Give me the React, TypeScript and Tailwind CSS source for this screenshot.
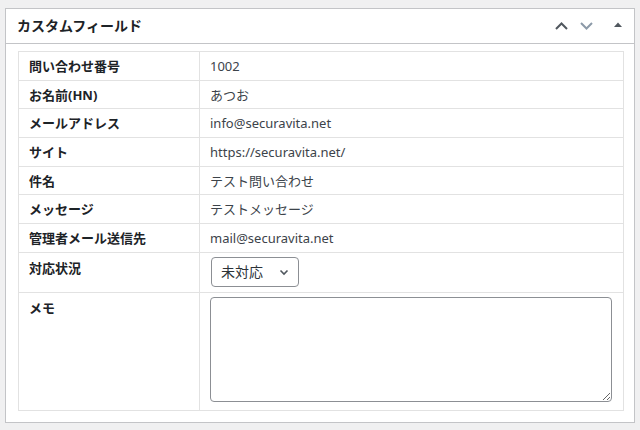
const rows: { label: string; value: string }[] = [
  { label: "問い合わせ番号", value: "1002" },
  { label: "お名前(HN)", value: "あつお" },
  { label: "メールアドレス", value: "info@securavita.net" },
  { label: "サイト", value: "https://securavita.net/" },
  { label: "件名", value: "テスト問い合わせ" },
  { label: "メッセージ", value: "テストメッセージ" },
  { label: "管理者メール送信先", value: "mail@securavita.net" },
];

export default function App() {
  return (
    <div
      className="w-[640px] h-[430px] bg-[#f0f0f1] pt-[8px] px-[5px]"
      style={{ fontFamily: '"Noto Sans", "Noto Sans CJK JP", sans-serif' }}
    >
      <div className="bg-white border border-[#c3c4c7] h-[415px]">
        <div className="h-[35px] border-b border-[#c3c4c7] flex items-center pl-[11px] pr-[12px]">
          <h2 className="text-[14px] font-bold text-[#1d2327] flex-1 leading-none">
            カスタムフィールド
          </h2>
          <div className="flex items-center">
            <svg width="13" height="8" viewBox="0 0 13 8">
              <path d="M1 7 L6.5 1.5 L12 7" stroke="#50575e" strokeWidth="2" fill="none" />
            </svg>
            <svg width="13" height="8" viewBox="0 0 13 8" className="ml-[12px]">
              <path d="M1 1 L6.5 6.5 L12 1" stroke="#8c9aa8" strokeWidth="2" fill="none" />
            </svg>
            <svg width="8" height="6" viewBox="0 0 8 6" className="ml-[21px] -mt-[2px]">
              <path d="M0 5 L4 0.5 L8 5 Z" fill="#50575e" />
            </svg>
          </div>
        </div>

        <div className="px-[12px] pt-[7px]">
          <table className="w-[606px] table-fixed border-collapse border border-[#e2e2e2] text-[13px]">
            <tbody>
              {rows.map((row) => (
                <tr key={row.label} className="h-[28.7px] border-b border-[#e2e2e2]">
                  <td className="w-[181px] p-0 pl-[10px] font-bold text-[#1d2327] border-r border-[#e2e2e2] leading-[14px]">
                    {row.label}
                  </td>
                  <td className="p-0 pl-[10px] text-[#3c434a] leading-[14px]">
                    {row.value}
                  </td>
                </tr>
              ))}
              <tr className="h-[40px] border-b border-[#e2e2e2]">
                <td className="w-[181px] align-top p-0 pt-[8px] pl-[10px] font-bold text-[#1d2327] border-r border-[#e2e2e2] leading-[14px]">
                  対応状況
                </td>
                <td className="align-top p-0 pt-[4px] pl-[11px]">
                  <div className="w-[88px] h-[30px] border border-[#8c8f94] rounded-[4px] flex items-center pl-[9px] pr-[8px] text-[14px] text-[#2c3338]">
                    <span className="flex-1">未対応</span>
                    <svg width="12" height="12" viewBox="0 0 12 12">
                      <path d="M2.5 4.5 L6 8 L9.5 4.5" stroke="#50575e" strokeWidth="1.6" fill="none" />
                    </svg>
                  </div>
                </td>
              </tr>
              <tr className="h-[118px]">
                <td className="w-[181px] align-top p-0 pt-[8px] pl-[10px] font-bold text-[#1d2327] border-r border-[#e2e2e2] leading-[14px]">
                  メモ
                </td>
                <td className="align-top p-0 pt-[4px] pl-[10px] pr-[10px]">
                  <textarea className="block w-[402px] h-[105px] border border-[#8c8f94] rounded-[4px] outline-none" />
                </td>
              </tr>
            </tbody>
          </table>
        </div>
      </div>
    </div>
  );
}
